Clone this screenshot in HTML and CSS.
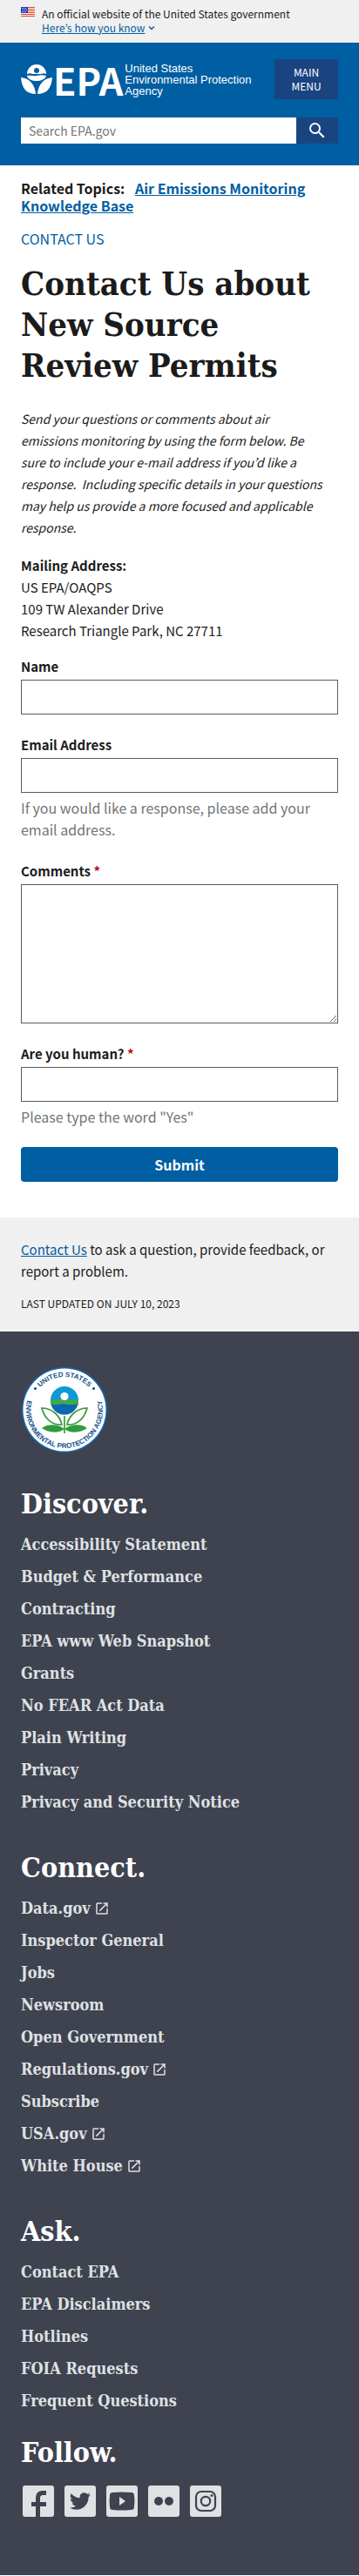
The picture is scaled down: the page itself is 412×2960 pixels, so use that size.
FILE: index.html
```html
<!DOCTYPE html>
<html lang="en">
<head>
<meta charset="utf-8">
<meta name="viewport" content="width=device-width, initial-scale=1">
<title>Contact Us about New Source Review Permits | US EPA</title>
<link rel="stylesheet" href="styles.css">
</head>
<body>
<svg class="sprite" aria-hidden="true">
  <symbol id="launch" viewBox="0 0 24 24"><path d="M19 19H5V5h7V3H5a2 2 0 0 0-2 2v14a2 2 0 0 0 2 2h14c1.100 0 2-.9 2-2v-7h-2v7zM14 3v2h3.590l-9.830 9.830 1.410 1.410L19 6.410V10h2V3h-7z"/></symbol>
</svg>

<section class="banner" aria-label="Official government website">
  <svg class="flag" viewBox="0 0 16 11" aria-hidden="true">
    <path fill="#fff" d="M0 0h16v11H0z"/>
    <path fill="#db3e1f" d="M0 0h16v1H0zM0 2h16v1H0zM0 4h16v1H0zM0 6h16v1H0zM0 8h16v1H0zM0 10h16v1H0z"/>
    <path fill="#1e33b1" d="M0 0h8v7H0z"/>
    <path fill="#fff" d="M1 1h1v1H1zM3 1h1v1H3zM5 1h1v1H5zM2 3h1v1H2zM4 3h1v1H4zM6 3h1v1H6zM1 5h1v1H1zM3 5h1v1H3zM5 5h1v1H5z"/>
  </svg>
  <div>
    <p class="banner-text">An official website of the United States government</p>
    <button class="banner-button" type="button"><span>Here’s how you know</span>
      <svg viewBox="0 0 8 6" aria-hidden="true"><path d="M1 1.500l3 3 3-3" fill="none" stroke="currentColor" stroke-width="1.400"/></svg>
    </button>
  </div>
</section>

<header class="header">
  <div class="header-top">
    <a class="logo" href="#" aria-label="US EPA home">
      <svg class="logo-mark" viewBox="0 0 36 38" aria-hidden="true">
        <path d="M7 13a11 11 0 0 1 22 0c-2-1-4-1-6 0H13c-2-1-4-1-6 0z"/>
        <circle class="logo-hole" cx="18" cy="9" r="3"/>
        <path d="M7 15c4-1 7 1 11 0s7-1 11 0c-1 4-6 6-11 6S8 19 7 15z"/>
        <path d="M0 17c10 1 16 8 17 19C7 36 1 30 0 17zM36 17C26 18 20 25 19 36c10 0 16-6 17-19z"/>
      </svg>
      <span class="logo-epa">EPA</span>
      <span class="logo-name">United States<br>Environmental Protection<br>Agency</span>
    </a>
    <button class="menu-button" type="button">MAIN MENU</button>
  </div>
  <form class="search" role="search">
    <input type="search" placeholder="Search EPA.gov" aria-label="Search EPA.gov">
    <button type="submit" aria-label="Search">
      <svg viewBox="0 0 24 24" aria-hidden="true"><path d="M15.500 14h-.79l-.28-.27A6.470 6.470 0 0 0 16 9.500 6.500 6.500 0 1 0 9.500 16c1.610 0 3.090-.59 4.230-1.570l.27.28v.79l5 4.990L20.490 19l-4.990-5zm-6 0C7.010 14 5 11.990 5 9.500S7.010 5 9.500 5 14 7.010 14 9.500 11.990 14 9.500 14z"/></svg>
    </button>
  </form>
</header>

<main class="main">
  <p class="related">Related Topics: <a href="#">Air Emissions Monitoring Knowledge Base</a></p>
  <p class="web-area"><a href="#">CONTACT US</a></p>
  <h1>Contact Us about New Source Review Permits</h1>
  <p class="intro">Send your questions or comments about air<br>emissions monitoring by using the form below. Be<br>sure to include your e-mail address if you’d like a<br>response.&nbsp; Including specific details in your questions<br>may help us provide a more focused and applicable<br>response.</p>
  <p class="address"><strong>Mailing Address:</strong><br>US EPA/OAQPS<br>109 TW Alexander Drive<br>Research Triangle Park, NC 27711</p>
  <form class="form">
    <div class="field">
      <label for="name">Name</label>
      <input id="name" type="text">
    </div>
    <div class="field">
      <label for="email">Email Address</label>
      <input id="email" type="email" aria-describedby="email-hint">
      <p class="hint" id="email-hint">If you would like a response, please add your email address.</p>
    </div>
    <div class="field">
      <label for="comments">Comments <span class="required">*</span></label>
      <textarea id="comments" required></textarea>
    </div>
    <div class="field">
      <label for="human">Are you human? <span class="required">*</span></label>
      <input id="human" type="text" required aria-describedby="human-hint">
      <p class="hint" id="human-hint">Please type the word "Yes"</p>
    </div>
    <button class="submit" type="submit">Submit</button>
  </form>
</main>

<aside class="feedback">
  <p><a href="#">Contact Us</a> to ask a question, provide feedback, or report a problem.</p>
  <p class="updated">LAST UPDATED ON JULY 10, 2023</p>
</aside>

<footer class="footer">
  <svg class="seal" viewBox="0 0 100 100" role="img" aria-label="United States Environmental Protection Agency">
    <defs>
      <path id="arc-top" d="M12 50a38 38 0 0 1 76 0"/>
      <path id="arc-bottom" d="M12.500 27A44 44 0 1 0 87.500 27"/>
    </defs>
    <circle cx="50" cy="50" r="49" fill="#0d69b3"/>
    <circle cx="50" cy="50" r="47.500" fill="#fff"/>
    <g class="seal-text">
      <text text-anchor="middle"><textPath href="#arc-top" startOffset="50%">UNITED STATES</textPath></text>
      <text text-anchor="middle"><textPath href="#arc-bottom" startOffset="50%">ENVIRONMENTAL PROTECTION AGENCY</textPath></text>
      <circle cx="16.500" cy="25.500" r="1.600"/><circle cx="83.500" cy="25.500" r="1.600"/>
    </g>
    <circle cx="50" cy="39" r="16" fill="#0c9ad7"/>
    <path fill="#46a844" d="M34.200 38c6 2 10-1 16 0s10 1 15.600 0v6H34.200z"/>
    <path fill="#0868b1" d="M34.500 43.500c5 2 11-1 16 0s10 1 15 0A16 16 0 0 1 34.500 43.500z"/>
    <circle cx="50" cy="34.500" r="4.600" fill="#fff"/>
    <g fill="none" stroke="#3b9a3d" stroke-width="1.700">
      <path d="M24 48c12 0 21 9 23 19C36 68 27 60 24 48zM76 48c-12 0-21 9-23 19C64 68 73 60 76 48z"/>
      <path d="M50 57v20"/>
    </g>
    <path fill="#2f9b3c" d="M24 71c8-6 20-4 26 1 6-5 18-7 26-1-8 6-20 6-26 1-6 5-18 5-26-1z"/>
  </svg>

  <nav class="footer-group" aria-labelledby="discover">
    <h2 id="discover">Discover.</h2>
    <ul>
      <li><a href="#">Accessibility Statement</a></li>
      <li><a href="#">Budget &amp; Performance</a></li>
      <li><a href="#">Contracting</a></li>
      <li><a href="#">EPA www Web Snapshot</a></li>
      <li><a href="#">Grants</a></li>
      <li><a href="#">No FEAR Act Data</a></li>
      <li><a href="#">Plain Writing</a></li>
      <li><a href="#">Privacy</a></li>
      <li><a href="#">Privacy and Security Notice</a></li>
    </ul>
  </nav>
  <nav class="footer-group" aria-labelledby="connect">
    <h2 id="connect">Connect.</h2>
    <ul>
      <li><a href="#">Data.gov<svg class="launch"><use href="#launch"/></svg></a></li>
      <li><a href="#">Inspector General</a></li>
      <li><a href="#">Jobs</a></li>
      <li><a href="#">Newsroom</a></li>
      <li><a href="#">Open Government</a></li>
      <li><a href="#">Regulations.gov<svg class="launch"><use href="#launch"/></svg></a></li>
      <li><a href="#">Subscribe</a></li>
      <li><a href="#">USA.gov<svg class="launch"><use href="#launch"/></svg></a></li>
      <li><a href="#">White House<svg class="launch"><use href="#launch"/></svg></a></li>
    </ul>
  </nav>
  <nav class="footer-group footer-group-last" aria-labelledby="ask">
    <h2 id="ask">Ask.</h2>
    <ul>
      <li><a href="#">Contact EPA</a></li>
      <li><a href="#">EPA Disclaimers</a></li>
      <li><a href="#">Hotlines</a></li>
      <li><a href="#">FOIA Requests</a></li>
      <li><a href="#">Frequent Questions</a></li>
    </ul>
  </nav>
  <section aria-labelledby="follow">
    <h2 id="follow">Follow.</h2>
    <div class="social">
      <a href="#" aria-label="Facebook"><svg viewBox="0 0 36 36"><path d="M15 36V24h-5v-5h5v-4c0-6 3-9 8-9h4v5h-3c-3 0-4 1-4 4v4h7v5h-7v12z"/></svg></a>
      <a href="#" aria-label="Twitter"><svg viewBox="0 0 36 36"><path transform="translate(6 6)" d="M23.950 4.570a10 10 0 0 1-2.820.77 4.960 4.960 0 0 0 2.160-2.720c-.95.550-2 .95-3.130 1.180a4.920 4.920 0 0 0-8.380 4.480C7.690 8.090 4.070 6.130 1.640 3.160a4.920 4.920 0 0 0 1.520 6.570 4.900 4.900 0 0 1-2.230-.61v.06c0 2.380 1.690 4.370 3.950 4.820a5 5 0 0 1-2.210.09 4.940 4.940 0 0 0 4.600 3.420A9.870 9.870 0 0 1 0 19.540a14 14 0 0 0 7.550 2.210c9.050 0 14-7.500 14-13.980 0-.21 0-.42-.02-.63a9.940 9.940 0 0 0 2.420-2.570z"/></svg></a>
      <a href="#" aria-label="YouTube"><svg viewBox="0 0 36 36"><path fill-rule="evenodd" d="M8 8q10-1 20 0c3 0 4 1 4 4q1 6 0 12c0 3-1 4-4 4q-10 1-20 0c-3 0-4-1-4-4q-1-6 0-12c0-3 1-4 4-4zm7 5v10l7-5z"/></svg></a>
      <a href="#" aria-label="Flickr"><svg viewBox="0 0 36 36"><circle cx="12" cy="18" r="5"/><circle cx="24" cy="18" r="5"/></svg></a>
      <a href="#" aria-label="Instagram"><svg viewBox="0 0 36 36"><g fill="none" stroke="currentColor" stroke-width="2.200"><rect x="7" y="7" width="22" height="22" rx="6"/><circle cx="18" cy="18" r="5.200"/></g><circle cx="25" cy="11.500" r="1.500"/></svg></a>
    </div>
  </section>
</footer>
</body>
</html>
```

FILE: styles.css
```css
:root {
  --sans: "Noto Sans CJK KR", "Noto Sans", sans-serif;
  --serif: "DejaVu Serif Condensed", "DejaVu Serif", serif;
  --blue: #005ea2;
  --navy: #1a4480;
  --ink: #1b1b1b;
  --slate: #3f4350;
}

* {
  box-sizing: border-box;
}

body {
  margin: 0;
  font: 15px/25px var(--sans);
  color: var(--ink);
  background: #fff;
}

p,
h1,
h2,
ul {
  margin: 0;
}

a {
  color: var(--blue);
}

button {
  border: 0;
  font-family: inherit;
  cursor: pointer;
}

.sprite {
  display: none;
}

/* Government banner */
.banner {
  display: flex;
  gap: 8px;
  padding: 8px 24px 9px;
  background: #f0f0f0;
}

.flag {
  flex: none;
  width: 16px;
  height: 11px;
}

.banner-text,
.banner-button {
  font-size: 12px;
  line-height: 16px;
}

.banner-button {
  display: flex;
  align-items: center;
  gap: 4px;
  padding: 0;
  color: var(--blue);
  background: none;
}

.banner-button span {
  text-decoration: underline;
}

.banner-button svg {
  width: 8px;
  height: 6px;
}

/* Header */
.header {
  padding: 19px 24px 25px;
  background: var(--blue);
}

.header-top {
  display: flex;
  align-items: center;
  justify-content: space-between;
  margin-bottom: 21px;
}

.logo {
  display: flex;
  align-items: center;
  color: #fff;
  text-decoration: none;
}

.logo-mark {
  width: 36px;
  height: 38px;
  fill: #fff;
}

.logo-mark .logo-hole {
  fill: var(--blue);
}

.logo-epa {
  margin: 0 2px 0 1px;
  font: bold 43px/46px "Liberation Sans Narrow", "Noto Sans CJK KR", sans-serif;
}

.logo-name {
  font: 13px/13px "Liberation Sans", sans-serif;
  white-space: nowrap;
}

.menu-button {
  width: 73px;
  padding: 7px 16px;
  font-size: 12px;
  line-height: 16px;
  color: #fff;
  background: var(--navy);
}

.search {
  display: flex;
  height: 30px;
}

.search input {
  flex: 1;
  min-width: 0;
  padding: 0 8px;
  border: 1px solid #fff;
  border-radius: 0;
  font: 14px/20px var(--sans);
  background: #fff;
  appearance: none;
}

.search input::placeholder {
  color: #757575;
}

.search button {
  display: grid;
  place-items: center;
  width: 48px;
  padding: 0;
  background: var(--navy);
}

.search svg {
  width: 24px;
  height: 24px;
  fill: #fff;
}

/* Main content */
.main {
  padding: 16px 24px 41px;
}

.related {
  font-size: 16px;
  font-weight: bold;
  line-height: 20px;
}

.related a {
  margin-left: 8px;
}

.web-area {
  margin: 16px 0 15px;
  font-size: 16px;
}

.web-area a {
  text-decoration: none;
}

h1 {
  font: bold 38px/47px var(--serif);
}

.intro {
  margin: 26px 0 18px;
  font-size: 14px;
  font-style: italic;
}

.form {
  display: grid;
}

.field {
  margin-top: 16px;
  padding-bottom: 6px;
}

.field label {
  display: block;
  margin-bottom: 3px;
  font-weight: bold;
}

.field input,
.field textarea {
  display: block;
  width: 100%;
  height: 40px;
  padding: 8px;
  border: 1px solid #565c65;
  border-radius: 0;
  font: inherit;
}

.field textarea {
  height: 160px;
}

.hint {
  margin-top: 5px;
  font-size: 16px;
  color: #71767a;
}

.required {
  color: #b50909;
}

.submit {
  height: 40px;
  margin-top: 16px;
  border-radius: 4px;
  font-size: 16px;
  font-weight: bold;
  color: #fff;
  background: var(--blue);
}

/* Feedback strip */
.feedback {
  padding: 24px 24px 20px;
  background: #f0f0f0;
}

.updated {
  margin-top: 12px;
  font-size: 12px;
}

/* Footer */
.footer {
  padding: 40px 24px 67px;
  color: #fff;
  background: var(--slate);
}

.seal {
  display: block;
  width: 100px;
  height: 100px;
  margin-bottom: 38px;
}

.seal-text {
  font: bold 8px "Liberation Sans", sans-serif;
  fill: #15508c;
}

h2 {
  font: bold 32px/40px var(--serif);
}

.footer-group {
  margin-bottom: 43px;
}

.footer-group-last {
  margin-bottom: 27px;
}

.footer-group ul {
  display: grid;
  gap: 12px;
  margin-top: 14px;
  padding: 0;
  list-style: none;
}

.footer-group a {
  display: flex;
  align-items: center;
  gap: 4px;
  font: bold 18px/25px var(--serif);
  color: #dfe1e2;
  text-decoration: none;
}

.launch {
  width: 18px;
  height: 18px;
  fill: currentColor;
}

.social {
  display: flex;
  gap: 12px;
  margin-top: 18px;
  padding-left: 2px;
}

.social a {
  width: 36px;
  height: 36px;
  border-radius: 3px;
  color: var(--slate);
  background: #dfe1e2;
}

.social svg {
  display: block;
  fill: currentColor;
}
```
